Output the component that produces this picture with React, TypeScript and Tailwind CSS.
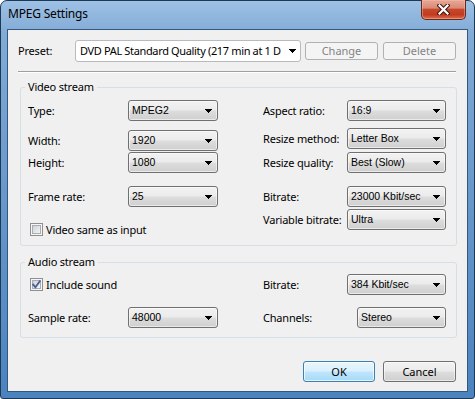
import React from "react";

const LABEL = "text-[11px] leading-[14px] tracking-[-0.2px] text-black whitespace-nowrap";

function Arrow() {
  return (
    <svg width="7" height="4" viewBox="0 0 7 4" className="shrink-0" shapeRendering="crispEdges">
      <path d="M0 0h7v1H0zM1 1h5v1H1zM2 2h3v1H2zM3 3h1v1H3z" fill="#000" />
    </svg>
  );
}

function Combo({ value, width }: { value: string; width: string }) {
  return (
    <div
      className={`${width} h-[21px] shrink-0 flex items-center justify-between rounded-[3px] border border-[#707070] bg-[linear-gradient(180deg,#f2f2f2_0%,#ebebeb_48%,#dddddd_52%,#cfcfcf_100%)] shadow-[inset_0_0_0_1px_rgba(255,255,255,0.55)] pl-[3px] pr-[5px]`}
    >
      <span className="font-['Liberation_Sans',sans-serif] text-[10.5px] leading-[13px] text-black whitespace-nowrap">
        {value}
      </span>
      <Arrow />
    </div>
  );
}

function Field({
  label,
  value,
  labelW,
  width,
  className = "",
}: {
  label: string;
  value: string;
  labelW: string;
  width: string;
  className?: string;
}) {
  return (
    <div className={`flex items-center ${className}`}>
      <span className={`${labelW} ${LABEL}`}>{label}</span>
      <Combo value={value} width={width} />
    </div>
  );
}

function Check({ checked = false }: { checked?: boolean }) {
  const id = checked ? "cb1" : "cb0";
  return (
    <svg width="13" height="13" viewBox="0 0 13 13" className="shrink-0">
      <defs>
        <linearGradient id={id} x1="0" y1="0" x2="1" y2="1">
          <stop offset="0" stopColor="#cbcfd5" />
          <stop offset="1" stopColor="#f7f7f7" />
        </linearGradient>
      </defs>
      <rect x="0.5" y="0.5" width="12" height="12" fill="#f6f6f6" stroke="#8e8f8f" />
      <rect x="2.5" y="2.5" width="8" height="8" fill={`url(#${id})`} stroke="#a9adb3" />
      {checked && (
        <path d="M3.2 6.6 L5.4 9.2 L9.8 3.2" stroke="#4b5d92" strokeWidth="1.8" fill="none" strokeLinecap="square" />
      )}
    </svg>
  );
}

function CloseButton() {
  return (
    <div className="-mt-[1px] mr-[2px] w-[45px] h-[20px] flex items-center justify-center rounded-b-[5px] border border-t-0 border-[#6a271c] bg-[linear-gradient(180deg,#e8a898_0%,#d98a74_42%,#c7472d_50%,#c13b20_78%,#dd7050_100%)] shadow-[inset_0_0_0_1px_rgba(255,190,170,0.45)]">
      <svg width="13" height="11" viewBox="0 0 13 11">
        <path d="M2.5 1.5 L10.5 9.5 M10.5 1.5 L2.5 9.5" stroke="#3b1710" strokeWidth="4.2" strokeLinecap="square" />
        <path d="M2.5 1.5 L10.5 9.5 M10.5 1.5 L2.5 9.5" stroke="#ffffff" strokeWidth="2.2" strokeLinecap="square" />
      </svg>
    </div>
  );
}

export default function App() {
  return (
    <div className="w-[475px] h-[399px] font-['Noto_Sans','Liberation_Sans',sans-serif] flex flex-col rounded-t-[7px] rounded-b-[3px] border border-[#1d3954] bg-[linear-gradient(180deg,#9ec1e5_0%,#82abd6_8%,#6797cb_50%,#4b83bf_100%)] px-[6px] pb-[6px]">
      {/* Title bar */}
      <div className="h-[28px] flex items-start justify-between shrink-0">
        <span className="pl-[1px] pt-[5px] text-[12px] leading-[16px] tracking-[-0.2px] text-black">MPEG Settings</span>
        <CloseButton />
      </div>

      {/* Client */}
      <div className="flex-1 flex flex-col border border-[#34577c] bg-[#f0f0f0]">
        {/* Preset */}
        <div className="flex items-center pt-[10px] pl-[10px]">
          <span className={`w-[57px] ${LABEL}`}>Preset:</span>
          <div className="w-[226px] h-[22px] flex items-center justify-between rounded-[3px] border border-[#b8babe] bg-white pl-[4px] pr-[4px]">
            <span className="text-[11px] leading-[14px] tracking-[-0.35px] text-black whitespace-nowrap">
              DVD PAL Standard Quality (217 min at 1 D
            </span>
            <Arrow />
          </div>
          <div className="ml-[4px] w-[73px] h-[18px] flex items-center justify-center rounded-[3px] border border-[#adb2b5] bg-[#f4f4f4] text-[11px] leading-[14px] text-[#838383]">
            Change
          </div>
          <div className="ml-[5px] w-[73px] h-[18px] flex items-center justify-center rounded-[3px] border border-[#adb2b5] bg-[#f4f4f4] text-[11px] leading-[14px] text-[#838383]">
            Delete
          </div>
        </div>

        {/* Separator */}
        <div className="mt-[9px] ml-[10px] mr-[11px] h-[2px] border-t border-b border-t-[#a0a0a0] border-b-white" />

        {/* Video stream */}
        <fieldset className="mt-[7px] ml-[12px] mr-[10px] border border-[#d5dfe5] rounded-[3px] pb-[9px]">
          <legend className="ml-[4px] px-[3px] text-[11px] leading-[14px] tracking-[-0.2px] text-black">Video stream</legend>
          <div className="flex items-start pt-[6px] pl-[7px]">
            <div className="w-[190px] flex flex-col">
              <Field label="Type:" value="MPEG2" labelW="w-[100px]" width="w-[90px]" />
              <Field label="Width:" value="1920" labelW="w-[100px]" width="w-[90px]" className="mt-[9px]" />
              <Field label="Height:" value="1080" labelW="w-[100px]" width="w-[90px]" className="mt-[1px]" />
              <Field label="Frame rate:" value="25" labelW="w-[100px]" width="w-[90px]" className="mt-[13px]" />
              <div className="mt-[16px] pl-[2px] h-[13px] flex items-center gap-[3px]">
                <Check />
                <span className={LABEL}>Video same as input</span>
              </div>
            </div>
            <div className="ml-[45px] flex flex-col">
              <Field label="Aspect ratio:" value="16:9" labelW="w-[84px]" width="w-[99px]" />
              <Field label="Resize method:" value="Letter Box" labelW="w-[84px]" width="w-[99px]" className="mt-[7px]" />
              <Field label="Resize quality:" value="Best (Slow)" labelW="w-[84px]" width="w-[99px]" className="mt-[3px]" />
              <Field label="Bitrate:" value="23000 Kbit/sec" labelW="w-[84px]" width="w-[99px]" className="mt-[13px]" />
              <Field label="Variable bitrate:" value="Ultra" labelW="w-[84px]" width="w-[99px]" className="mt-[2px]" />
            </div>
          </div>
        </fieldset>

        {/* Audio stream */}
        <fieldset className="mt-[9px] ml-[12px] mr-[10px] border border-[#d5dfe5] rounded-[3px] pb-[9px]">
          <legend className="ml-[4px] px-[3px] text-[11px] leading-[14px] tracking-[-0.2px] text-black">Audio stream</legend>
          <div className="flex items-start pt-[5px] pl-[7px]">
            <div className="w-[190px] flex flex-col">
              <div className="h-[21px] pl-[2px] flex items-center gap-[3px]">
                <Check checked />
                <span className={LABEL}>Include sound</span>
              </div>
              <Field label="Sample rate:" value="48000" labelW="w-[100px]" width="w-[90px]" className="mt-[12px]" />
            </div>
            <div className="ml-[45px] flex flex-col">
              <Field label="Bitrate:" value="384 Kbit/sec" labelW="w-[84px]" width="w-[99px]" />
              <Field label="Channels:" value="Stereo" labelW="w-[94px]" width="w-[89px]" className="mt-[12px]" />
            </div>
          </div>
        </fieldset>

        {/* Buttons */}
        <div className="mt-[23px] flex justify-end gap-[8px] pr-[11px]">
          <div className="w-[72px] h-[21px] flex items-center justify-center rounded-[3px] border border-[#3c7fb1] bg-[linear-gradient(180deg,#eaf6fd_0%,#d9f0fc_48%,#bee6fd_52%,#a7d9f5_100%)] shadow-[inset_0_0_0_1px_rgba(255,255,255,0.7)] text-[11px] leading-[14px] text-black">
            OK
          </div>
          <div className="w-[73px] h-[21px] flex items-center justify-center rounded-[3px] border border-[#707070] bg-[linear-gradient(180deg,#f2f2f2_0%,#ebebeb_48%,#dddddd_52%,#cfcfcf_100%)] shadow-[inset_0_0_0_1px_rgba(255,255,255,0.55)] text-[11px] leading-[14px] text-black">
            Cancel
          </div>
        </div>
      </div>
    </div>
  );
}
